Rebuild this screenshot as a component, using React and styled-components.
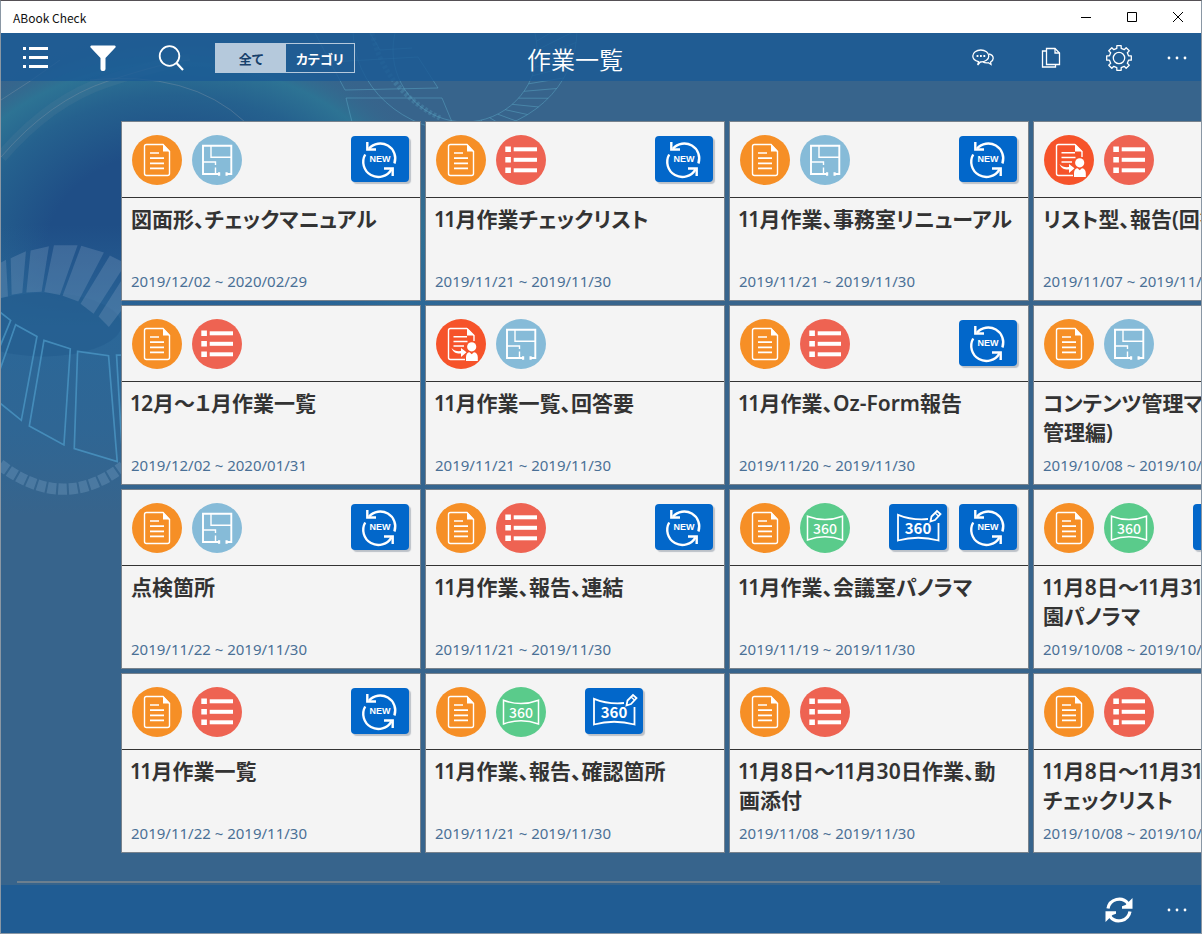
// src/App.jsx
import React, { useState } from 'react';
import styled, { createGlobalStyle } from 'styled-components';

const GlobalStyle = createGlobalStyle`
  * {
    box-sizing: border-box;
  }

  body {
    margin: 0;
    background: #37648c;
    font-family: 'Noto Sans', 'Noto Sans CJK JP', sans-serif;
  }

  button {
    font-family: inherit;
    border: 0;
    padding: 0;
    background: transparent;
    color: inherit;
    cursor: pointer;
  }

  svg {
    display: block;
  }
`;

const Shell = styled.div`
  position: relative;
  display: flex;
  flex-direction: column;
  min-height: 100vh;
  overflow: hidden;
  border: 1px solid #8a97a4;
  border-top-color: #555055;
  background: #37648c;
`;

const Backdrop = styled.svg`
  position: absolute;
  top: 32px;
  left: 0;
`;

const TitleBar = styled.header`
  position: relative;
  display: flex;
  align-items: center;
  justify-content: space-between;
  height: 32px;
  padding-left: 12px;
  background: #ffffff;
  color: #111111;
  font-family: 'Noto Sans CJK JP', sans-serif;
  font-size: 12px;
`;

const WindowButtons = styled.div`
  display: flex;
`;

const WindowButton = styled.button`
  display: grid;
  place-items: center;
  width: 46px;
  height: 32px;
`;

const Bar = styled.div`
  position: relative;
  display: flex;
  align-items: center;
  height: 48px;
  padding-top: 2px;
  color: #ffffff;
  background: rgba(26, 90, 149, 0.8);
`;

const BottomBar = styled(Bar)`
  justify-content: flex-end;
`;

const BarButton = styled.button`
  display: grid;
  place-items: center;
  width: ${({ $narrow }) => ($narrow ? '48px' : '68px')};
  height: 48px;
`;

const Segments = styled.div`
  display: flex;
  height: 30px;
  margin-left: 10px;
  border: 1px solid #b5c9dc;
`;

const Segment = styled.button`
  width: ${({ $active }) => ($active ? '70px' : '68px')};
  font-size: 13px;
  font-weight: 700;
  font-feature-settings: 'palt';
  color: ${({ $active }) => ($active ? '#17406b' : '#ffffff')};
  background: ${({ $active }) => ($active ? '#b5c9dc' : 'transparent')};
`;

const PageTitle = styled.h1`
  margin: 0 0 0 172px;
  padding-top: 4px;
  font-size: 24px;
  line-height: 44px;
  font-weight: 350;
`;

const BarActions = styled.div`
  display: flex;
  margin-left: auto;
`;

const Main = styled.main`
  position: relative;
  flex: 1;
  display: flex;
  flex-direction: column;
  justify-content: space-between;
`;

const Board = styled.ul`
  display: grid;
  grid-template-rows: repeat(4, 180px);
  grid-auto-flow: column;
  grid-auto-columns: 300px;
  gap: 4px;
  margin: 0;
  padding: 40px 0 0 120px;
  list-style: none;
  overflow-x: auto;
  scrollbar-width: none;
`;

const Card = styled.li`
  display: flex;
  flex-direction: column;
  border: 1px solid #77828d;
  background: #f4f4f4;
`;

const CardHeader = styled.div`
  display: flex;
  align-items: center;
  gap: 10px;
  height: 76px;
  padding: 0 11px 0 10px;
  border-bottom: 1px solid #333333;
`;

const Badges = styled.div`
  display: grid;
  grid-template-columns: 58px 58px;
  gap: 12px;
  margin: 0 0 2px auto;
`;

const Badge = styled.div`
  grid-column: ${({ $slot }) => $slot};
  height: 46px;
  border-radius: 4px;
  background: #0267ca;
  box-shadow: 2px 2px 1px #bcc1c8;
`;

const CardBody = styled.div`
  flex: 1;
  display: flex;
  flex-direction: column;
  justify-content: space-between;
  padding: 7px 9px;
`;

const CardTitle = styled.h2`
  margin: 0;
  font-size: 21px;
  line-height: 29px;
  font-weight: 600;
  font-feature-settings: 'palt', 'pnum';
  color: #333333;
  white-space: nowrap;
`;

const CardDate = styled.p`
  margin: 0;
  font-size: 15px;
  line-height: 24px;
  font-weight: 400;
  color: #4a7096;
`;

const ScrollTrack = styled.div`
  height: 2px;
  margin: 0 0 2px;
  padding: 0 16px;
`;

const ScrollThumb = styled.div`
  width: 79%;
  height: 2px;
  background: #6c7f8f;
`;

/* ---------- Card icons ---------- */

const DocIcon = () => (
  <svg width="50" height="50" viewBox="0 0 50 50" role="img" aria-label="報告">
    <circle cx="25" cy="25" r="25" fill="#f68f26" />
    <path d="M31 9.5H14.5a2 2 0 0 0-2 2v27a2 2 0 0 0 2 2h21a2 2 0 0 0 2-2V16.5z" fill="none" stroke="#fff" strokeWidth="1.4" />
    <path d="M31 9v7.5h7.3z" fill="#fff" />
    <path d="M18 18h9M18 23.2h14M18 28.3h14M18 33.4h14" stroke="#fff" strokeWidth="1.7" />
  </svg>
);

const AnswerIcon = () => (
  <svg width="50" height="50" viewBox="0 0 50 50" role="img" aria-label="回答">
    <circle cx="25" cy="25" r="25" fill="#f6532a" />
    <path d="M31 9.5H14.5a2 2 0 0 0-2 2v27a2 2 0 0 0 2 2H29M31 9.5l7 7V22" fill="none" stroke="#fff" strokeWidth="1.4" />
    <path d="M31 9v7.5h7.3z" fill="#fff" />
    <path d="M17.5 17.8H31M17.5 22.5h14M17.5 27H28" stroke="#fff" strokeWidth="1.5" />
    <path d="M15.5 29c2 5 6 6 9.5 5.5V38l5.5-4.7-5.5-4.2v3c-4 .6-7-.6-9.5-3.1z" fill="#fff" />
    <circle cx="35.7" cy="27.8" r="4.6" fill="#fff" />
    <path d="M30 42v-4c0-3 1.8-4.8 3.5-4.8l2.2 2 2.2-2c1.8 0 3.9 1.8 3.9 4.8v4z" fill="#fff" />
  </svg>
);

const ListIcon = () => (
  <svg width="50" height="50" viewBox="0 0 50 50" role="img" aria-label="チェックリスト">
    <circle cx="25" cy="25" r="25" fill="#ee6352" />
    {[12, 22.5, 33].map((y) => (
      <g key={y} fill="#fff">
        <rect x="9.3" y={y - 0.5} width="5.6" height="5.5" />
        <rect x="17.7" y={y + 0.3} width="23.3" height="4" />
      </g>
    ))}
  </svg>
);

const PlanIcon = () => (
  <svg width="50" height="50" viewBox="0 0 50 50" role="img" aria-label="図面">
    <circle cx="25" cy="25" r="25" fill="#86bbd8" />
    <path d="M27.5 39H11V10.7h28.3V39H34.5" fill="none" stroke="#fff" strokeWidth="1.9" />
    <path d="M19 10.7v11.6h20M11 27h12.5v3M23.5 32.5V39" fill="none" stroke="#fff" strokeWidth="1.4" />
    <path d="M26 37.2h2.2v3.5H26zM33.5 37.2h2.2v3.5h-2.2z" fill="#fff" />
  </svg>
);

const PanoIcon = () => (
  <svg width="50" height="50" viewBox="0 0 50 50" role="img" aria-label="360パノラマ">
    <circle cx="25" cy="25" r="25" fill="#5acb8b" />
    <path d="M7.5 13.2Q25 19.8 42.5 13.2V37Q25 30.5 7.5 37z" fill="none" stroke="#fff" strokeWidth="1.5" />
    <text x="25" y="30.5" textAnchor="middle" fontFamily="Noto Sans CJK JP" fontSize="14" fontWeight="500" fill="#fff">360</text>
  </svg>
);

const NewBadge = () => (
  <Badge $slot={2}>
    <svg width="58" height="46" viewBox="0 0 58 46">
      <g fill="none" stroke="#fff" strokeWidth="2.4">
        <path d="M18 12.6A15 15 0 0 1 43.4 27.5" />
        <path d="M14.2 18.5A15 15 0 0 0 40.5 33.3" />
        <path d="M16.3 6V13.5h8.7M41.7 40v-7.5h-8.7" />
      </g>
      <text x="29" y="26.3" textAnchor="middle" fontFamily="Liberation Sans" fontSize="9" fontWeight="700" fill="#fff">NEW</text>
    </svg>
  </Badge>
);

const PanoEditBadge = () => (
  <Badge $slot={1}>
    <svg width="58" height="46" viewBox="0 0 58 46">
      <path d="M39 15Q23 16.5 9 10.8V36.5Q29 31 49.5 36.5V19" fill="none" stroke="#fff" strokeWidth="1.8" />
      <text x="29" y="29.5" textAnchor="middle" fontFamily="Noto Sans CJK JP" fontSize="15" fontWeight="700" fill="#fff">360</text>
      <path d="M41.5 17.5l1-5 5.5-5.5 3.5 3-5.5 6z" fill="none" stroke="#fff" strokeWidth="1.8" />
      <path d="M46 9l3.5 3" stroke="#fff" strokeWidth="1.3" />
    </svg>
  </Badge>
);

const ICONS = {
  doc: DocIcon,
  answer: AnswerIcon,
  list: ListIcon,
  plan: PlanIcon,
  pano: PanoIcon,
};

/* ---------- Bar icons ---------- */

const MenuIcon = () => (
  <svg width="26" height="24" viewBox="0 0 26 24" fill="currentColor">
    {[1, 10, 19].map((y) => (
      <g key={y}>
        <rect x="1" y={y} width="3" height="3" />
        <rect x="7" y={y} width="19" height="3" />
      </g>
    ))}
  </svg>
);

const FilterIcon = () => (
  <svg width="26" height="26" viewBox="0 0 26 26" fill="currentColor">
    <path d="M1.5.5h23a1.2 1.2 0 0 1 .9 2L15.5 13v11a2 2 0 0 1-2 2h-1a2 2 0 0 1-2-2V13L.6 2.5a1.2 1.2 0 0 1 .9-2z" />
  </svg>
);

const SearchIcon = () => (
  <svg width="26" height="26" viewBox="0 0 26 26" fill="none" stroke="currentColor" strokeWidth="1.8">
    <circle cx="11.5" cy="11" r="9.8" />
    <path d="M18.5 18l6.5 7" strokeWidth="2.2" />
  </svg>
);

const ChatIcon = () => (
  <svg width="22" height="18" viewBox="0 0 22 18" fill="none" stroke="currentColor" strokeWidth="1.3">
    <path d="M6.5 12.6C3 11.7.8 9.600.8 7 .8 3.500 4.400 1 8.800 1s8 2.500 8 6-3.600 6-8 6h-.5l-2.600 3z" />
    <path d="M17 5c2.500.600 4.200 2.200 4.200 4.200 0 1.600-1 3-2.600 3.800l.400 2.500-2.600-1.700c-2 .300-4 .100-5.500-.900" />
    <path d="M4.6 7h1.800M8 7h1.800M11.400 7h1.800" strokeWidth="1.8" />
  </svg>
);

const PagesIcon = () => (
  <svg width="20" height="22" viewBox="0 0 20 22" fill="none" stroke="currentColor" strokeWidth="1.3">
    <path d="M5.5 1.5h8.5l4.5 4.5v11.5h-13z" />
    <path d="M14 1.5V6h4.5M5.5 4H1.5v16h13v-2.5" />
  </svg>
);

// Eight square teeth around a ring, drawn from polar coordinates
const gearPath = () => {
  const points = [];
  for (let i = 0; i < 8; i += 1) {
    [[-13, 9.8], [-10, 12.5], [10, 12.5], [13, 9.8]].forEach(([offset, r]) => {
      const a = ((i * 45 + offset) * Math.PI) / 180;
      points.push(`${(13 + r * Math.sin(a)).toFixed(2)} ${(13 - r * Math.cos(a)).toFixed(2)}`);
    });
  }
  return `M${points.join('L')}z`;
};

const GearIcon = () => (
  <svg width="26" height="26" viewBox="0 0 26 26" fill="none" stroke="currentColor" strokeWidth="1.3" strokeLinejoin="round">
    <path d={gearPath()} />
    <circle cx="13" cy="13" r="5.7" />
  </svg>
);

const MoreIcon = () => (
  <svg width="20" height="4" viewBox="0 0 20 4" fill="currentColor">
    <circle cx="2" cy="2" r="1.4" />
    <circle cx="10" cy="2" r="1.4" />
    <circle cx="18" cy="2" r="1.4" />
  </svg>
);

const SyncIcon = () => (
  <svg width="28" height="28" viewBox="0 0 28 28">
    <g fill="none" stroke="currentColor" strokeWidth="3.2">
      <path d="M3 12.5A11.3 11.3 0 0 1 23 7.5" />
      <path d="M25 15.5A11.3 11.3 0 0 1 5 20.5" />
    </g>
    <path d="M27.5 2v10.7H17V10.3l3.5-1.2zM.5 26V15.3H11v2.4l-3.5 1.2z" fill="currentColor" />
  </svg>
);

/* ---------- Background drawing ---------- */

const spokes = Array.from({ length: 17 }, (_, i) => {
  const a = ((i * 7 - 14) * Math.PI) / 180;
  return {
    x1: 465 + 72 * Math.cos(a),
    y1: 50 + 72 * Math.sin(a),
    x2: 465 + 112 * Math.cos(a),
    y2: 30 + 102 * Math.sin(a),
  };
});

const BackdropArt = () => (
  <Backdrop width="640" height="560" viewBox="1 33 640 560" aria-hidden="true">
    <defs>
      <radialGradient id="teal">
        <stop offset="0.45" stopColor="#1f4e86" />
        <stop offset="0.7" stopColor="#25618e" />
        <stop offset="0.85" stopColor="#2d7394" />
        <stop offset="1" stopColor="#37648c" stopOpacity="0" />
      </radialGradient>
      <linearGradient id="fade" x1="0" y1="0" x2="0" y2="1">
        <stop offset="0" stopColor="#2a679a" stopOpacity="0" />
        <stop offset="0.35" stopColor="#2b6798" />
        <stop offset="0.7" stopColor="#2f6694" />
        <stop offset="1" stopColor="#37648c" />
      </linearGradient>
    </defs>
    <ellipse cx="175" cy="250" rx="285" ry="220" fill="url(#teal)" />
    <rect x="0" y="225" width="480" height="290" fill="url(#fade)" />
    <g fill="none" stroke="#7f93a8" strokeOpacity="0.4">
      <path d="M1 157Q50 100 108 81T190 60" />
      <path d="M1 100Q30 82 60 60" />
      <path d="M90 80Q190 70 245 122" />
    </g>
    <path d="M1 157Q50 100 108 81T190 60" fill="none" stroke="#7f93a8" strokeOpacity="0.12" strokeWidth="12" />
    <g transform="translate(0 80) scale(0.333)">
      <ellipse cx="130" cy="735" rx="235" ry="95" fill="#235b8d" fillOpacity="0.6" />
      <g fill="#8aa5c6" fillOpacity="0.28">
        <path d="M0 550L18 540L24 650L0 655z" />
        <path d="M32 535L78 514L67 640L35 645z" />
        <path d="M92 512L147 499L125 636L79 638z" />
        <path d="M162 496L233 496L180 646L133 637z" />
        <path d="M244 498L312 518L235 665L188 648z" />
        <path d="M330 527L366 545L366 570L281 702L242 672z" />
        <path d="M366 600L366 690L327 742L296 710z" />
      </g>
      <g fill="none" stroke="#4f9cca" strokeOpacity="0.7" strokeWidth="5">
        <path d="M0 697L32 722L0 800" />
        <path d="M0 970L64 1022L111 770L47 735L0 870" />
        <path d="M132 782L211 807L192 1096L88 1039z" />
        <path d="M233 815L326 828L352 1146L223 1107z" />
        <path d="M370 826L350 826L366 1100" />
      </g>
      <path d="M0 1155Q190 1300 370 1160" fill="none" stroke="#8ab0d0" strokeOpacity="0.28" strokeWidth="34" strokeDasharray="26 6" />
    </g>
    <g fill="none" stroke="#5aa5c4" strokeOpacity="0.5">
      <ellipse cx="465" cy="30" rx="112" ry="102" />
      <circle cx="465" cy="50" r="72" />
      {spokes.map((s) => (
        <line key={s.x1} {...s} />
      ))}
      <path d="M315 33L345 90L438 88L418 57L330 62M346 98L442 98L452 122M346 98L352 122M370 33L380 50L412 48" />
      <path d="M372 33Q385 90 440 118" strokeWidth="5" strokeDasharray="3 2" strokeOpacity="0.3" />
    </g>
  </Backdrop>
);

/* ---------- Data, column by column ---------- */

const tasks = [
  { icons: ['doc', 'plan'], isNew: true, title: ['図面形、チェックマニュアル'], from: '2019/12/02', to: '2020/02/29' },
  { icons: ['doc', 'list'], title: ['12月～１月作業一覧'], from: '2019/12/02', to: '2020/01/31' },
  { icons: ['doc', 'plan'], isNew: true, title: ['点検箇所'], from: '2019/11/22', to: '2019/11/30' },
  { icons: ['doc', 'list'], isNew: true, title: ['11月作業一覧'], from: '2019/11/22', to: '2019/11/30' },

  { icons: ['doc', 'list'], isNew: true, title: ['11月作業チェックリスト'], from: '2019/11/21', to: '2019/11/30' },
  { icons: ['answer', 'plan'], title: ['11月作業一覧、回答要'], from: '2019/11/21', to: '2019/11/30' },
  { icons: ['doc', 'list'], isNew: true, title: ['11月作業、報告、連結'], from: '2019/11/21', to: '2019/11/30' },
  { icons: ['doc', 'pano'], panoEdit: true, title: ['11月作業、報告、確認箇所'], from: '2019/11/21', to: '2019/11/30' },

  { icons: ['doc', 'plan'], isNew: true, title: ['11月作業、事務室リニューアル'], from: '2019/11/21', to: '2019/11/30' },
  { icons: ['doc', 'list'], isNew: true, title: ['11月作業、Oz-Form報告'], from: '2019/11/20', to: '2019/11/30' },
  { icons: ['doc', 'pano'], panoEdit: true, isNew: true, title: ['11月作業、会議室パノラマ'], from: '2019/11/19', to: '2019/11/30' },
  { icons: ['doc', 'list'], title: ['11月8日～11月30日作業、動', '画添付'], from: '2019/11/08', to: '2019/11/30' },

  { icons: ['answer', 'list'], title: ['リスト型、報告(回答)'], from: '2019/11/07', to: '2019/11/30' },
  { icons: ['doc', 'plan'], title: ['コンテンツ管理マニュアル(', '管理編)'], from: '2019/10/08', to: '2019/10/31' },
  { icons: ['doc', 'pano'], panoEdit: true, isNew: true, title: ['11月8日～11月31日作業、公', '園パノラマ'], from: '2019/10/08', to: '2019/10/31' },
  { icons: ['doc', 'list'], title: ['11月8日～11月31日作業、', 'チェックリスト'], from: '2019/10/08', to: '2019/10/31' },
];

const TaskCard = ({ task }) => (
  <Card>
    <CardHeader>
      {task.icons.map((name) => {
        const Icon = ICONS[name];
        return <Icon key={name} />;
      })}
      <Badges>
        {task.panoEdit && <PanoEditBadge />}
        {task.isNew && <NewBadge />}
      </Badges>
    </CardHeader>
    <CardBody>
      <CardTitle>
        {task.title.map((line, i) => (
          <React.Fragment key={line}>
            {i > 0 && <br />}
            {line}
          </React.Fragment>
        ))}
      </CardTitle>
      <CardDate>{task.from} ~ {task.to}</CardDate>
    </CardBody>
  </Card>
);

const App = () => {
  const [tab, setTab] = useState('all');

  return (
    <Shell>
      <GlobalStyle />
      <BackdropArt />

      <TitleBar>
        <span>ABook Check</span>
        <WindowButtons>
          <WindowButton aria-label="最小化">
            <svg width="10" height="10" stroke="#000"><path d="M0 5.5h10" /></svg>
          </WindowButton>
          <WindowButton aria-label="最大化">
            <svg width="10" height="10" fill="none" stroke="#000"><path d="M.5.5h9v9h-9z" /></svg>
          </WindowButton>
          <WindowButton aria-label="閉じる">
            <svg width="10" height="10" stroke="#000"><path d="M0 0l10 10M10 0L0 10" /></svg>
          </WindowButton>
        </WindowButtons>
      </TitleBar>

      <Bar>
        <BarButton aria-label="メニュー"><MenuIcon /></BarButton>
        <BarButton aria-label="フィルター"><FilterIcon /></BarButton>
        <BarButton aria-label="検索"><SearchIcon /></BarButton>
        <Segments>
          <Segment $active={tab === 'all'} onClick={() => setTab('all')}>全て</Segment>
          <Segment $active={tab === 'category'} onClick={() => setTab('category')}>カテゴリ</Segment>
        </Segments>
        <PageTitle>作業一覧</PageTitle>
        <BarActions>
          <BarButton aria-label="チャット"><ChatIcon /></BarButton>
          <BarButton aria-label="コピー"><PagesIcon /></BarButton>
          <BarButton aria-label="設定"><GearIcon /></BarButton>
          <BarButton $narrow aria-label="その他"><MoreIcon /></BarButton>
        </BarActions>
      </Bar>

      <Main>
        <Board>
          {tasks.map((task) => (
            <TaskCard key={task.title.join('') + task.from} task={task} />
          ))}
        </Board>
        <ScrollTrack>
          <ScrollThumb />
        </ScrollTrack>
      </Main>

      <BottomBar>
        <BarButton aria-label="同期"><SyncIcon /></BarButton>
        <BarButton $narrow aria-label="その他"><MoreIcon /></BarButton>
      </BottomBar>
    </Shell>
  );
};

export default App;
